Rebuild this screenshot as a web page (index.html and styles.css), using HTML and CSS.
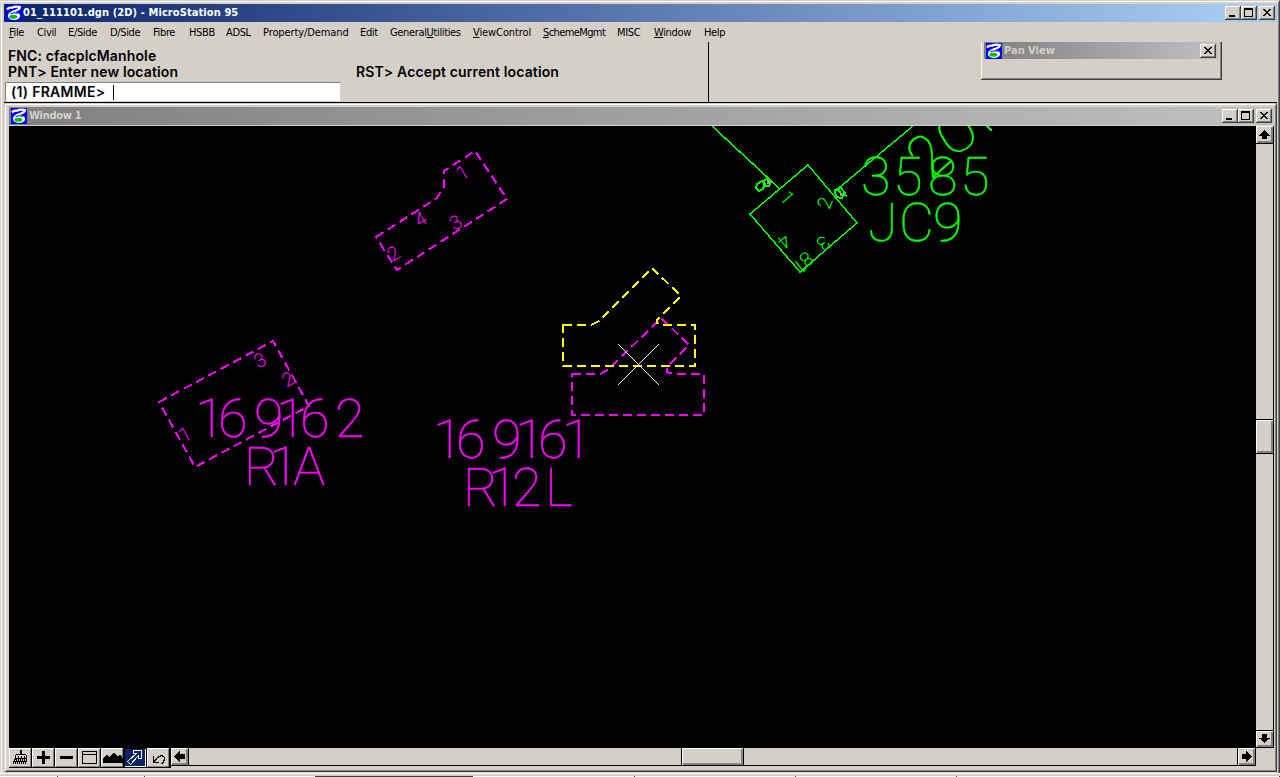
FILE: index.html
```
<!DOCTYPE html>
<html lang="en">
<head>
<meta charset="utf-8">
<title>01_111101.dgn (2D) - MicroStation 95</title>
<link rel="stylesheet" href="styles.css">
</head>
<body>
<svg class="defs" width="0" height="0">
  <symbol id="logo" viewBox="0 0 16 16">
    <rect width="16" height="16" fill="#00f"/>
    <ellipse cx="8" cy="11" rx="6.200" ry="4" fill="#fff"/>
    <path d="M1 4.500Q3 1.800 6 2.800Q9 1 14 2Q14 4 10 5.500Q6 6.500 3.500 9" fill="none" stroke="#fff" stroke-width="2.200"/>
    <path d="M4.500 8.800Q8 6.800 12 8.300" fill="none" stroke="#00f" stroke-width="1"/>
    <ellipse cx="7.300" cy="11.800" rx="4" ry="2" fill="#00c000"/>
  </symbol>
  <symbol id="min" viewBox="0 0 16 14"><path d="M4 9h6v2H4z"/></symbol>
  <symbol id="max" viewBox="0 0 16 14"><path d="M3 2h9v9H3zM4 4v6h7V4z" fill-rule="evenodd"/></symbol>
  <symbol id="close" viewBox="0 0 16 14"><path d="M4 3h2v1h1v1h2V4h1V3h2v1h-1v1h-1v1H9v1h1v1h1v1h1v1h-2V9H9V8H7v1H6v1H4V9h1V8h1V7h1V6H6V5H5V4H4z"/></symbol>
</svg>
<div class="app">
  <header class="titlebar main-title">
    <svg class="logo"><use href="#logo"/></svg>
    <span class="caption main-caption">01_111101.dgn (2D) - MicroStation 95</span>
    <span class="controls"><svg class="ctl"><use href="#min"/></svg><svg class="ctl"><use href="#max"/></svg><svg class="ctl close"><use href="#close"/></svg></span>
  </header>
  <nav class="menu">
    <span><u>F</u>ile</span><span>Civil</span><span>E/Side</span><span>D/Side</span><span>Fibre</span><span>HSBB</span><span>ADSL</span><span class="wide">Property/Demand</span><span>Edit</span><span>General<u>U</u>tilities</span><span class="wide"><u>V</u>iewControl</span><span class="tight"><u>S</u>chemeMgmt</span><span>MISC</span><span><u>W</u>indow</span><span>Help</span>
  </nav>
  <section class="command">
    <div class="prompts">
      <div class="line">FNC: cfacplcManhole</div>
      <div class="pair"><div class="line pnt">PNT&gt; Enter new location</div><div class="line rst">RST&gt; Accept current location</div></div>
      <div class="entry"><span>(1) FRAMME&gt;</span><i class="caret"></i></div>
    </div>
    <div class="pan">
      <div class="titlebar inactive">
        <svg class="logo"><use href="#logo"/></svg>
        <span class="caption pan-caption">Pan View</span>
        <span class="controls"><svg class="ctl"><use href="#close"/></svg></span>
      </div>
    </div>
  </section>
  <main class="window">
    <div class="titlebar inactive">
      <svg class="logo"><use href="#logo"/></svg>
      <span class="caption win-caption">Window 1</span>
      <span class="controls"><svg class="ctl"><use href="#min"/></svg><svg class="ctl"><use href="#max"/></svg><svg class="ctl close"><use href="#close"/></svg></span>
    </div>
    <div class="view">
      <svg class="drawing" viewBox="9 126 1247 622">
        <g class="magenta">
          <path class="dash" d="M376 237L437 198L444 187L444 171L475 151L507 199L397 270Z"/>
          <path class="dash" d="M159 402L273 341L309 406L195 467Z"/>
          <path class="dash" d="M572 374H600L609 369L661 318L689 345L667 367V372L673 374H704V415H572Z"/>
          <text class="small" transform="translate(466 178) rotate(-31)">1</text>
          <text class="small" transform="translate(424 225) rotate(-31)">4</text>
          <text class="small" transform="translate(459 228) rotate(-31)">3</text>
          <text class="small" transform="translate(397 259) rotate(-31)">2</text>
          <text class="small" transform="translate(263 366) rotate(-28)">3</text>
          <text class="small" transform="translate(291 385) rotate(-28)">2</text>
          <text class="small" transform="translate(188 440) rotate(-28)">1</text>
          <text class="label" x="195 218 254 276 300 335" y="437">169162</text>
          <text class="label" x="244 269 293" y="485">R1A</text>
          <text class="label" x="433 456 492 515 538 562" y="458">169161</text>
          <text class="label" x="463 488 512 545" y="506">R12L</text>
        </g>
        <path class="yellow dash" d="M563 325H591L599 321L652 268L681 296L657 320V323L661 325H695V366H563Z"/>
        <path class="cross" d="M618 344L659 385M659 344L618 385"/>
        <g class="green">
          <path class="line-g" d="M712 126L780 189M913 126L834 192M808 165L857 223L800 272L750 214Z"/>
          <path class="line-g heavy" d="M757 184l5-3 3 3-2 5-4 2-3-3zM764 181l4-3 3 4-2 4-5 0zM835 190l6-2 4 5-3 5-6-1zM838 190l5 6M843 194l4 2"/>
          <path class="node" d="M767 180h3v4h-3zM840 193h3v3h-3z"/>
          <text class="label" x="861 893 928 960" y="195">3585</text>
          <text class="label" x="868 899 933" y="241">JC9</text>
          <text class="label" transform="translate(930 181) rotate(-42) scale(1.050 1.100)">2</text>
          <text class="label thin" transform="translate(950 159) rotate(-32) scale(1.300 1)">0</text>
          <path class="line-g" d="M987 126L992 131"/>
          <text class="small" transform="translate(782 202) rotate(50)">1</text>
          <text class="small" transform="translate(831 205) rotate(-70)">2</text>
          <text class="small" transform="translate(780 236) rotate(140)">4</text>
          <text class="small" transform="translate(819 238) rotate(140)">3</text>
          <text class="small" transform="translate(802 254) rotate(140)">8</text>
          <text class="small" transform="translate(796 261) rotate(140)">1</text>
        </g>
      </svg>
      <div class="vscroll">
        <svg class="arrow" viewBox="0 0 17 17"><path d="M8 4h1v1h1v1h1v1h1v1h1v1h1v1h-3v3H6v-3H3V9h1V8h1V7h1V6h1V5h1z"/></svg>
        <div class="track-a"></div><div class="thumb"></div><div class="track-b"></div>
        <svg class="arrow" viewBox="0 0 17 17"><path d="M8 13h1v-1h1v-1h1v-1h1V9h1V8h1V7h-3V3H6v4H3v1h1v1h1v1h1v1h1v1h1z"/></svg>
      </div>
    </div>
    <div class="bottom">
      <div class="tools">
        <svg viewBox="-1 -1 22 19"><path d="M10 1h2v5h-2zM6 5h10v1H6zM5 6h1v5H5zM16 6h1v5h-1zM5 9h12v1H5zM8 7h1v2H8zM11 7h1v2h-1zM14 7h1v2h-1z"/><path d="M5 10l-2 5M7 10l-2 5M9 10l-2 5M11 10l-2 5M13 10l-2 5M15 10l-2 5M17 10l-2 5" stroke="#000"/></svg>
        <svg viewBox="-1 -1 22 19"><path d="M9 2h3v5h5v3h-5v5H9v-5H4V7h5z"/></svg>
        <svg viewBox="-1 -1 22 19"><path d="M4 7h13v3H4z"/></svg>
        <svg viewBox="-1 -1 22 19"><path d="M3 2h15v13H3zM4 3v2h13V3zM4 6v8h13V6z" fill-rule="evenodd"/></svg>
        <svg viewBox="-1 -1 22 19"><path d="M1 14V9h1V8h1V7h1V6h2v1h1v1h1V7h1V6h1V5h1V4h2v1h1v1h1v1h2V6h2v1h1v2h1v5z"/></svg>
        <svg class="pressed" viewBox="-1 -1 22 19"><path d="M2.500 12.500L11.500 4.500H8.500V1.500H16.500V9.500H13.500V6.500L5.500 15.500z" fill="none" stroke="#fff"/></svg>
        <svg viewBox="-1 -1 22 19"><path d="M5.500 7v6.500h5M6 13L9 9Q13 5 16 8Q18 12 13 15" fill="none" stroke="#000" stroke-width="1.200"/></svg>
      </div>
      <div class="hscroll">
        <svg class="arrow" viewBox="0 0 17 17"><path d="M3 8h1V7h1V6h1V5h1V4h1V3h1v3h5v5H9v3H8v-1H7v-1H6v-1H5v-1H4V9H3z"/></svg>
        <div class="track-a"></div><div class="thumb"></div><div class="track-b"></div>
        <svg class="arrow" viewBox="0 0 17 17"><path d="M14 8h-1V7h-1V6h-1V5h-1V4H9V3H8v3H4v5h4v3h1v-1h1v-1h1v-1h1v-1h1V9h1z"/></svg>
      </div>
    </div>
  </main>
</div>
<footer class="taskbar"><i></i><i></i><i></i><i class="active"></i><i></i><i></i><i></i><i></i></footer>
</body>
</html>
```
FILE: styles.css
```
* { box-sizing: border-box; }
body { margin: 0; width: 1280px; height: 777px; overflow: hidden; background: #d4d0c8; color: #000; font-family: "DejaVu Sans Condensed", "DejaVu Sans", sans-serif; font-size: 11px; }
.defs { display: block; }
.app { height: 773px; padding: 3px 3px 0 3px; border-top: 1px solid #d4d0c8; border-left: 1px solid #d4d0c8; border-right: 1px solid #404040; box-shadow: inset 1px 1px 0 #fff, inset -1px 0 0 #808080; }
svg { display: block; shape-rendering: crispEdges; }
.titlebar { display: flex; align-items: center; height: 18px; padding: 0 2px; background: linear-gradient(90deg, #0a246a, #a6caf0 96%); color: #fff; }
.main-title { margin-right: -1px; }
.inactive { background: linear-gradient(90deg, #808080, #c0c0c0); color: #d4d0c8; }
.logo { width: 16px; height: 16px; margin-right: 2px; shape-rendering: auto; }
.main-title .logo { margin-right: 1px; }
.caption { font-weight: bold; white-space: nowrap; line-height: 18px; }
.main-caption { letter-spacing: .09px; }
.win-caption { letter-spacing: -.3px; }
.controls { display: flex; margin-left: auto; }
.ctl { width: 16px; height: 14px; background: #d4d0c8; box-shadow: inset -1px -1px 0 #404040, inset 1px 1px 0 #fff, inset -2px -2px 0 #808080; }
.ctl.close { margin-left: 2px; }
.menu { display: grid; grid-template-columns: 28px 31px 42px 43px 36px 37px 37px 97px 30px 83px 70px 74px 37px 50px 60px; height: 20px; padding-left: 5px; line-height: 22px; white-space: nowrap; letter-spacing: -.35px; }
.menu .wide { letter-spacing: -.1px; }
.menu .tight { letter-spacing: -.6px; }
.command { display: flex; height: 61px; margin-right: -1px; border-bottom: 1px solid #000; }
.prompts { width: 705px; padding-top: 6px; border-right: 1px solid #000; font-family: Inter, "Liberation Sans", sans-serif; font-size: 14px; font-weight: 560; line-height: 16px; letter-spacing: .13px; }
.line { padding-left: 4px; white-space: nowrap; }
.pair { display: flex; }
.pnt { width: 348px; }
.entry { display: flex; width: 336px; height: 20px; margin: 2px 0 0 1px; padding: 0 0 0 5px; background: #fff; border: 1px solid #d4d0c8; border-top-color: #808080; border-left-color: #808080; line-height: 18px; letter-spacing: .28px; }
.caret { width: 1px; height: 15px; margin: 2px 0 0 8px; background: #000; }
.pan { width: 241px; height: 38px; margin-left: 272px; padding: 0 3px; border-right: 1px solid #404040; border-bottom: 1px solid #404040; box-shadow: inset 1px 0 0 #fff, inset -1px -1px 0 #808080; }
.pan .titlebar { height: 17px; }
.window { height: 669px; margin: 0 -1px 0 1px; padding: 3px 2px 0 4px; border-top: 1px solid #d4d0c8; border-right: 1px solid #404040; border-bottom: 1px solid #404040; box-shadow: inset 1px 1px 0 #fff, inset -1px -1px 0 #808080; }
.window > .titlebar { margin-bottom: 1px; }
.view { display: flex; height: 622px; }
.drawing { flex: none; width: 1247px; height: 622px; background: #000; }
.magenta { fill: #f0f; stroke: #f0f; }
.green { fill: #0f0; stroke: #0f0; }
.dash { fill: none; stroke-width: 2; stroke-dasharray: 9 5; }
.yellow { stroke: #ff0; }
.line-g { fill: none; stroke-width: 1.500; }
.heavy { stroke-width: 2; }
.cross { stroke: #fff; stroke-width: 1; }
.node { fill: #a0a0a0; stroke: none; }
.label { font-family: Roboto, sans-serif; font-weight: 100; font-size: 54px; stroke-width: .5; }
.label.thin { stroke-width: .2; }
.small { font-family: Roboto, sans-serif; font-weight: 100; font-size: 19px; stroke-width: .4; text-anchor: middle; }
.vscroll { display: flex; flex: none; flex-direction: column; width: 18px; border-right: 1px solid #000; }
.arrow { flex: none; width: 17px; height: 17px; background: #d4d0c8; box-shadow: inset 1px 1px 0 #fff, inset -2px -2px 0 #808080; }
.thumb { background: #d4d0c8; box-shadow: inset 1px 1px 0 #fff, inset -2px -2px 0 #848480; }
.vscroll .track-a { height: 277px; border: 1px solid #000; border-width: 1px 0; }
.vscroll .thumb { height: 33px; }
.vscroll .track-b { flex: 1; border: 1px solid #000; border-width: 1px 0; }
.vscroll .arrow:last-child { border-bottom: 1px solid #000; }
.bottom { display: flex; align-items: flex-start; width: 1247px; }
.tools { display: flex; gap: 1px; background: #000; width: 162px; height: 20px; padding-bottom: 1px; }
.tools svg { width: 22px; height: 19px; flex: none; background: #d4d0c8; box-shadow: inset 1px 1px 0 #fff, inset -1px -1px 0 #808080; }
.tools .pressed { background: #0a246a; box-shadow: inset 1px 1px 0 #000, inset -1px -1px 0 #fff; }
.hscroll { display: flex; flex: 1; height: 18px; border-bottom: 1px solid #000; border-right: 1px solid #000; }
.hscroll .track-a { width: 494px; border: 1px solid #000; border-width: 0 1px; }
.hscroll .thumb { width: 61px; }
.hscroll .track-b { flex: 1; border: 1px solid #000; border-width: 0 1px; }
.taskbar { display: grid; grid-template-columns: 58px 87px 171px 157px 162px 161px 161px 1fr; height: 4px; padding-top: 2px; border-top: 1px solid #fff; }
.taskbar i { height: 1px; background: #fff; border-right: 1px solid #404040; }
.taskbar .active { background: #404040; }
```
